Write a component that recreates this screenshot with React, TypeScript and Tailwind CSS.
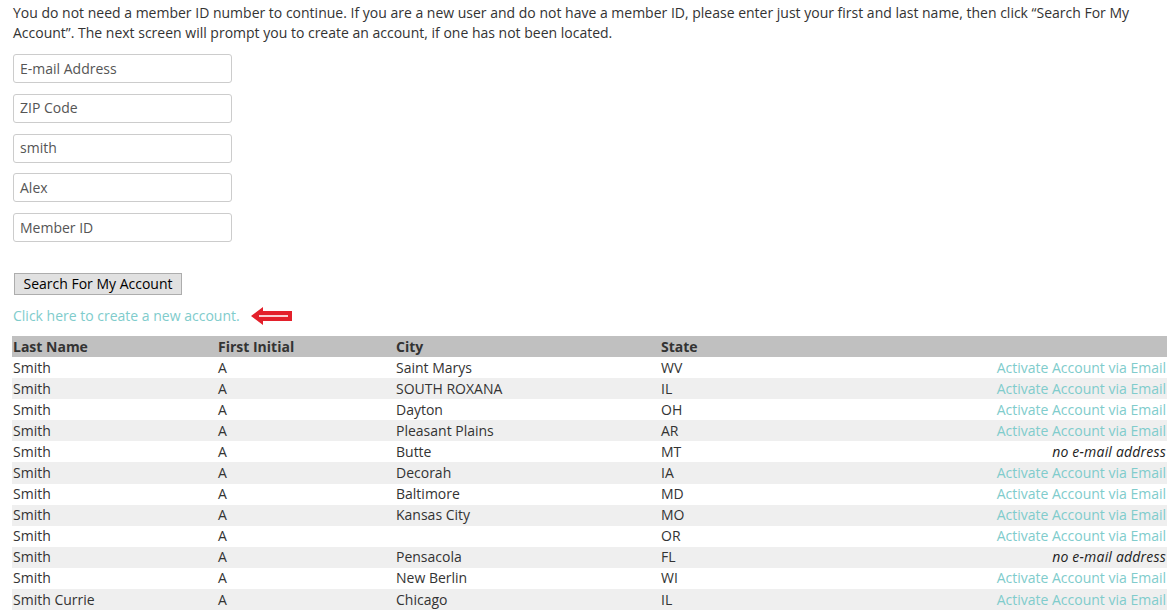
const rows: { last: string; city: string; state: string; email: boolean }[] = [
  { last: "Smith", city: "Saint Marys", state: "WV", email: true },
  { last: "Smith", city: "SOUTH ROXANA", state: "IL", email: true },
  { last: "Smith", city: "Dayton", state: "OH", email: true },
  { last: "Smith", city: "Pleasant Plains", state: "AR", email: true },
  { last: "Smith", city: "Butte", state: "MT", email: false },
  { last: "Smith", city: "Decorah", state: "IA", email: true },
  { last: "Smith", city: "Baltimore", state: "MD", email: true },
  { last: "Smith", city: "Kansas City", state: "MO", email: true },
  { last: "Smith", city: "", state: "OR", email: true },
  { last: "Smith", city: "Pensacola", state: "FL", email: false },
  { last: "Smith", city: "New Berlin", state: "WI", email: true },
  { last: "Smith Currie", city: "Chicago", state: "IL", email: true },
];

const fields = ["E-mail Address", "ZIP Code", "smith", "Alex", "Member ID"];

function Arrow() {
  return (
    <svg width="44" height="20" viewBox="0 0 44 20" className="ml-[10px]">
      <polygon points="1,10 13,1 13,5 42,5 42,15 13,15 13,19" fill="#e3202b" />
      <line x1="9" y1="10" x2="38" y2="10" stroke="#ffffff" strokeWidth="1.6" />
    </svg>
  );
}

export default function App() {
  return (
    <div className="bg-white text-[#333] text-[14px] leading-[20px] pl-[12px] pr-[8px] pt-[3px] min-h-[612px]" style={{ fontFamily: '"Open Sans", sans-serif' }}>
      <p className="pl-[1px]">
        You do not need a member ID number to continue. If you are a new user and do not have a member ID, please enter just your first and last name, then click “Search For My Account”. The next screen will prompt you to create an account, if one has not been located.
      </p>
      <div className="mt-[11px] flex flex-col gap-[10.75px] pl-[1px]">
        {fields.map((f) => (
          <div key={f} className="w-[219px] h-[29px] border border-[#ccc] rounded-[3px] pl-[6px] flex items-center text-[#555]">
            {f}
          </div>
        ))}
      </div>
      <button className="mt-[31px] ml-[2px] w-[168px] h-[22px] bg-[#e1e1e1] border border-[#adadad] text-black text-[14px] leading-[20px] flex items-center justify-center">
        Search For My Account
      </button>
      <div className="mt-[11px] flex items-center pl-[1px]">
        <span className="text-[#80cccc]">Click here to create a new account.</span>
        <Arrow />
      </div>
      <div className="mt-[10px] w-[1155px]">
        <div className="grid grid-cols-[205px_178px_265px_1fr_auto] h-[21px] items-center bg-[#c0c0c0] font-bold px-[1px]">
          <span>Last Name</span>
          <span>First Initial</span>
          <span>City</span>
          <span>State</span>
          <span></span>
        </div>
        {rows.map((r, i) => (
          <div key={i} className={`grid grid-cols-[205px_178px_265px_1fr_auto] h-[21.1px] items-center px-[1px] ${i % 2 === 1 ? "bg-[#efefef]" : "bg-white"}`}>
            <span>{r.last}</span>
            <span>A</span>
            <span>{r.city}</span>
            <span>{r.state}</span>
            {r.email ? (
              <span className="text-[#80cccc] text-right">Activate Account via Email</span>
            ) : (
              <span className="italic text-[#222] text-right tracking-[0.2px]">no e-mail address</span>
            )}
          </div>
        ))}
      </div>
    </div>
  );
}
